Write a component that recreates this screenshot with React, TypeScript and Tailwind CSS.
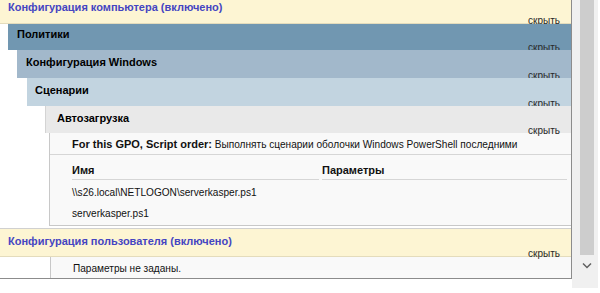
const font = { fontFamily: '"Liberation Sans", Arial, sans-serif' };

function Hide() {
  return (
    <span className="absolute right-[11px] bottom-[-3px] text-[10px] leading-none text-[#2a2a2a]">
      скрыть
    </span>
  );
}

function Header({
  title,
  className,
  titleClass = "text-black",
}: {
  title: string;
  className: string;
  titleClass?: string;
}) {
  return (
    <div className={`relative ${className}`}>
      <div className={`text-[11px] font-bold leading-[13px] ${titleClass}`}>{title}</div>
      <Hide />
    </div>
  );
}

export default function App() {
  return (
    <div className="w-[600px] h-[293px] bg-white flex overflow-hidden text-[10.1px]" style={font}>
      <div className="w-[572px] h-[279px] flex flex-col border-r border-b border-[#8c8c8c]">
        <Header
          title="Конфигурация компьютера (включено)"
          className="h-[24px] pl-[8px] pt-[1px] bg-[#fdf5d3] border-b border-[#e4dcbc]"
          titleClass="text-[#4545c2]"
        />
        <div className="ml-[8px] flex flex-col">
          <Header title="Политики" className="h-[26px] pl-[9px] pt-[4px] bg-[#7197b1]" />
          <div className="ml-[9px] flex flex-col">
            <Header title="Конфигурация Windows" className="h-[28px] pl-[9px] pt-[6px] bg-[#a2b8cb]" />
            <div className="ml-[10px] flex flex-col">
              <Header title="Сценарии" className="h-[28px] pl-[8px] pt-[6px] bg-[#c2d4e0]" />
              <div className="ml-[18px] flex flex-col">
                <Header
                  title="Автозагрузка"
                  className="h-[27px] pl-[11px] pt-[6px] bg-[#e9e9e9] border-l border-[#d4d4d4]"
                />
                <div className="ml-[4px] h-[93px] bg-[#f9f9f9] border-l border-b border-[#c8c8c8] text-[#111]">
                  <div className="h-[22px] pl-[22px] pt-[5px] border-b border-[#d6d6d6] leading-[13px]">
                    <span className="font-bold text-[11px]">For this GPO, Script order:</span> Выполнять сценарии
                    оболочки Windows PowerShell последними
                  </div>
                  <div className="pl-[22px] pr-[4px] pt-[9px] flex gap-[3px] text-[11px] font-bold leading-[13px]">
                    <div className="w-[247px] pb-[2px] border-b border-[#d6d6d6]">Имя</div>
                    <div className="flex-1 pb-[2px] border-b border-[#d6d6d6]">Параметры</div>
                  </div>
                  <div className="pl-[22px] pt-[6px] leading-[13px]">\\s26.local\NETLOGON\serverkasper.ps1</div>
                  <div className="pl-[22px] pt-[8px] leading-[13px]">serverkasper.ps1</div>
                </div>
              </div>
            </div>
          </div>
        </div>
        <div className="mt-[2px] border-t border-[#d0d0d0]">
          <Header
            title="Конфигурация пользователя (включено)"
            className="h-[28px] pl-[8px] pt-[6px] bg-[#fdf5d3] border-b border-[#e4dcbc]"
            titleClass="text-[#4545c2]"
          />
        </div>
        <div className="flex-1 ml-[50px] pl-[22px] pt-[5px] bg-[#f9f9f9] border-l border-[#c8c8c8] text-[#111] leading-[13px]">
          Параметры не заданы.
        </div>
      </div>
      <div className="w-[26px] h-[288px] bg-[#f0f0f0] flex flex-col items-center">
        <div className="ml-[3px] w-[14px] h-[255px] bg-[#cdcdcd]" />
        <svg className="ml-[3px] mt-[7px]" width="10" height="7" viewBox="0 0 10 7">
          <path d="M1 1.5 L5 5.5 L9 1.5" fill="none" stroke="#606060" strokeWidth="1.5" />
        </svg>
      </div>
    </div>
  );
}
